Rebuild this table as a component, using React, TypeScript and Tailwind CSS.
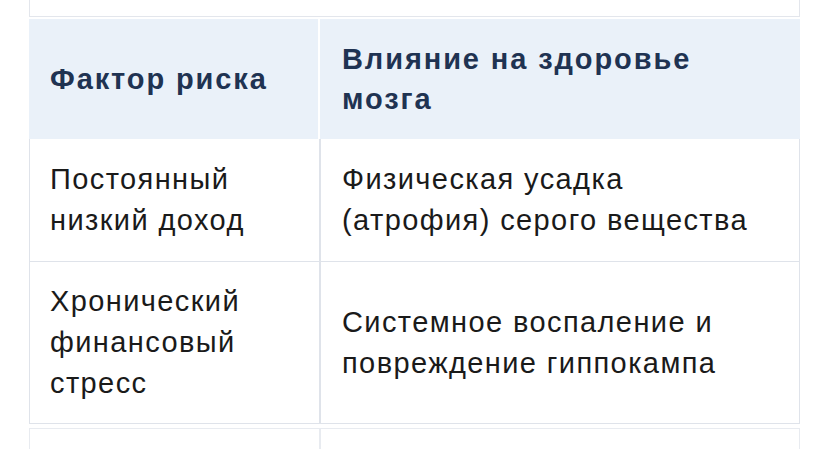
const rows = [
  { factor: ['Постоянный', 'низкий доход'], effect: 'Физическая усадка (атрофия) серого вещества', h: 'h-[123px]' },
  { factor: ['Хронический', 'финансовый', 'стресс'], effect: 'Системное воспаление и повреждение гиппокампа', h: 'h-[162px]' },
]

export default function App() {
  return (
    <div className="w-[827px] h-[449px] overflow-hidden bg-white pl-[29px]" style={{ fontFamily: '"Liberation Sans", Arial, sans-serif' }}>
      <div className="w-[771px]">
        {/* tail of the previous block */}
        <div className="h-[17px] border-x border-b border-[#e3e6ec]" />

        <div className="mt-[2px] grid grid-cols-[291px_480px] bg-[#eaf1f9] text-[#1f3352] font-bold text-[29px] leading-[40px] tracking-[1.9px]">
          <div className="h-[120px] flex items-center px-[21px] border-r-2 border-white">Фактор риска</div>
          <div className="h-[120px] flex items-center pl-[22px] pr-[20px]">Влияние на здоровье мозга</div>
        </div>

        {rows.map((row, i) => (
          <div key={i} className={`grid grid-cols-[291px_480px] border-x border-b border-[#dfe3ea] ${row.h} text-[29px] leading-[41px] tracking-[1.4px] text-[#1a1a1a]`}>
            <div className="flex items-center px-[20px] border-r-2 border-[#dfe3ea]">
              <div>
                {row.factor.map((l) => (
                  <div key={l}>{l}</div>
                ))}
              </div>
            </div>
            <div className="flex items-center pl-[21px] pr-[20px]">{row.effect}</div>
          </div>
        ))}

        <div className="mt-[4px] grid grid-cols-[291px_480px] h-[40px] border-x border-t border-[#e8ebf0]">
          <div className="border-r-2 border-[#e8ebf0]" />
          <div />
        </div>
      </div>
    </div>
  )
}
